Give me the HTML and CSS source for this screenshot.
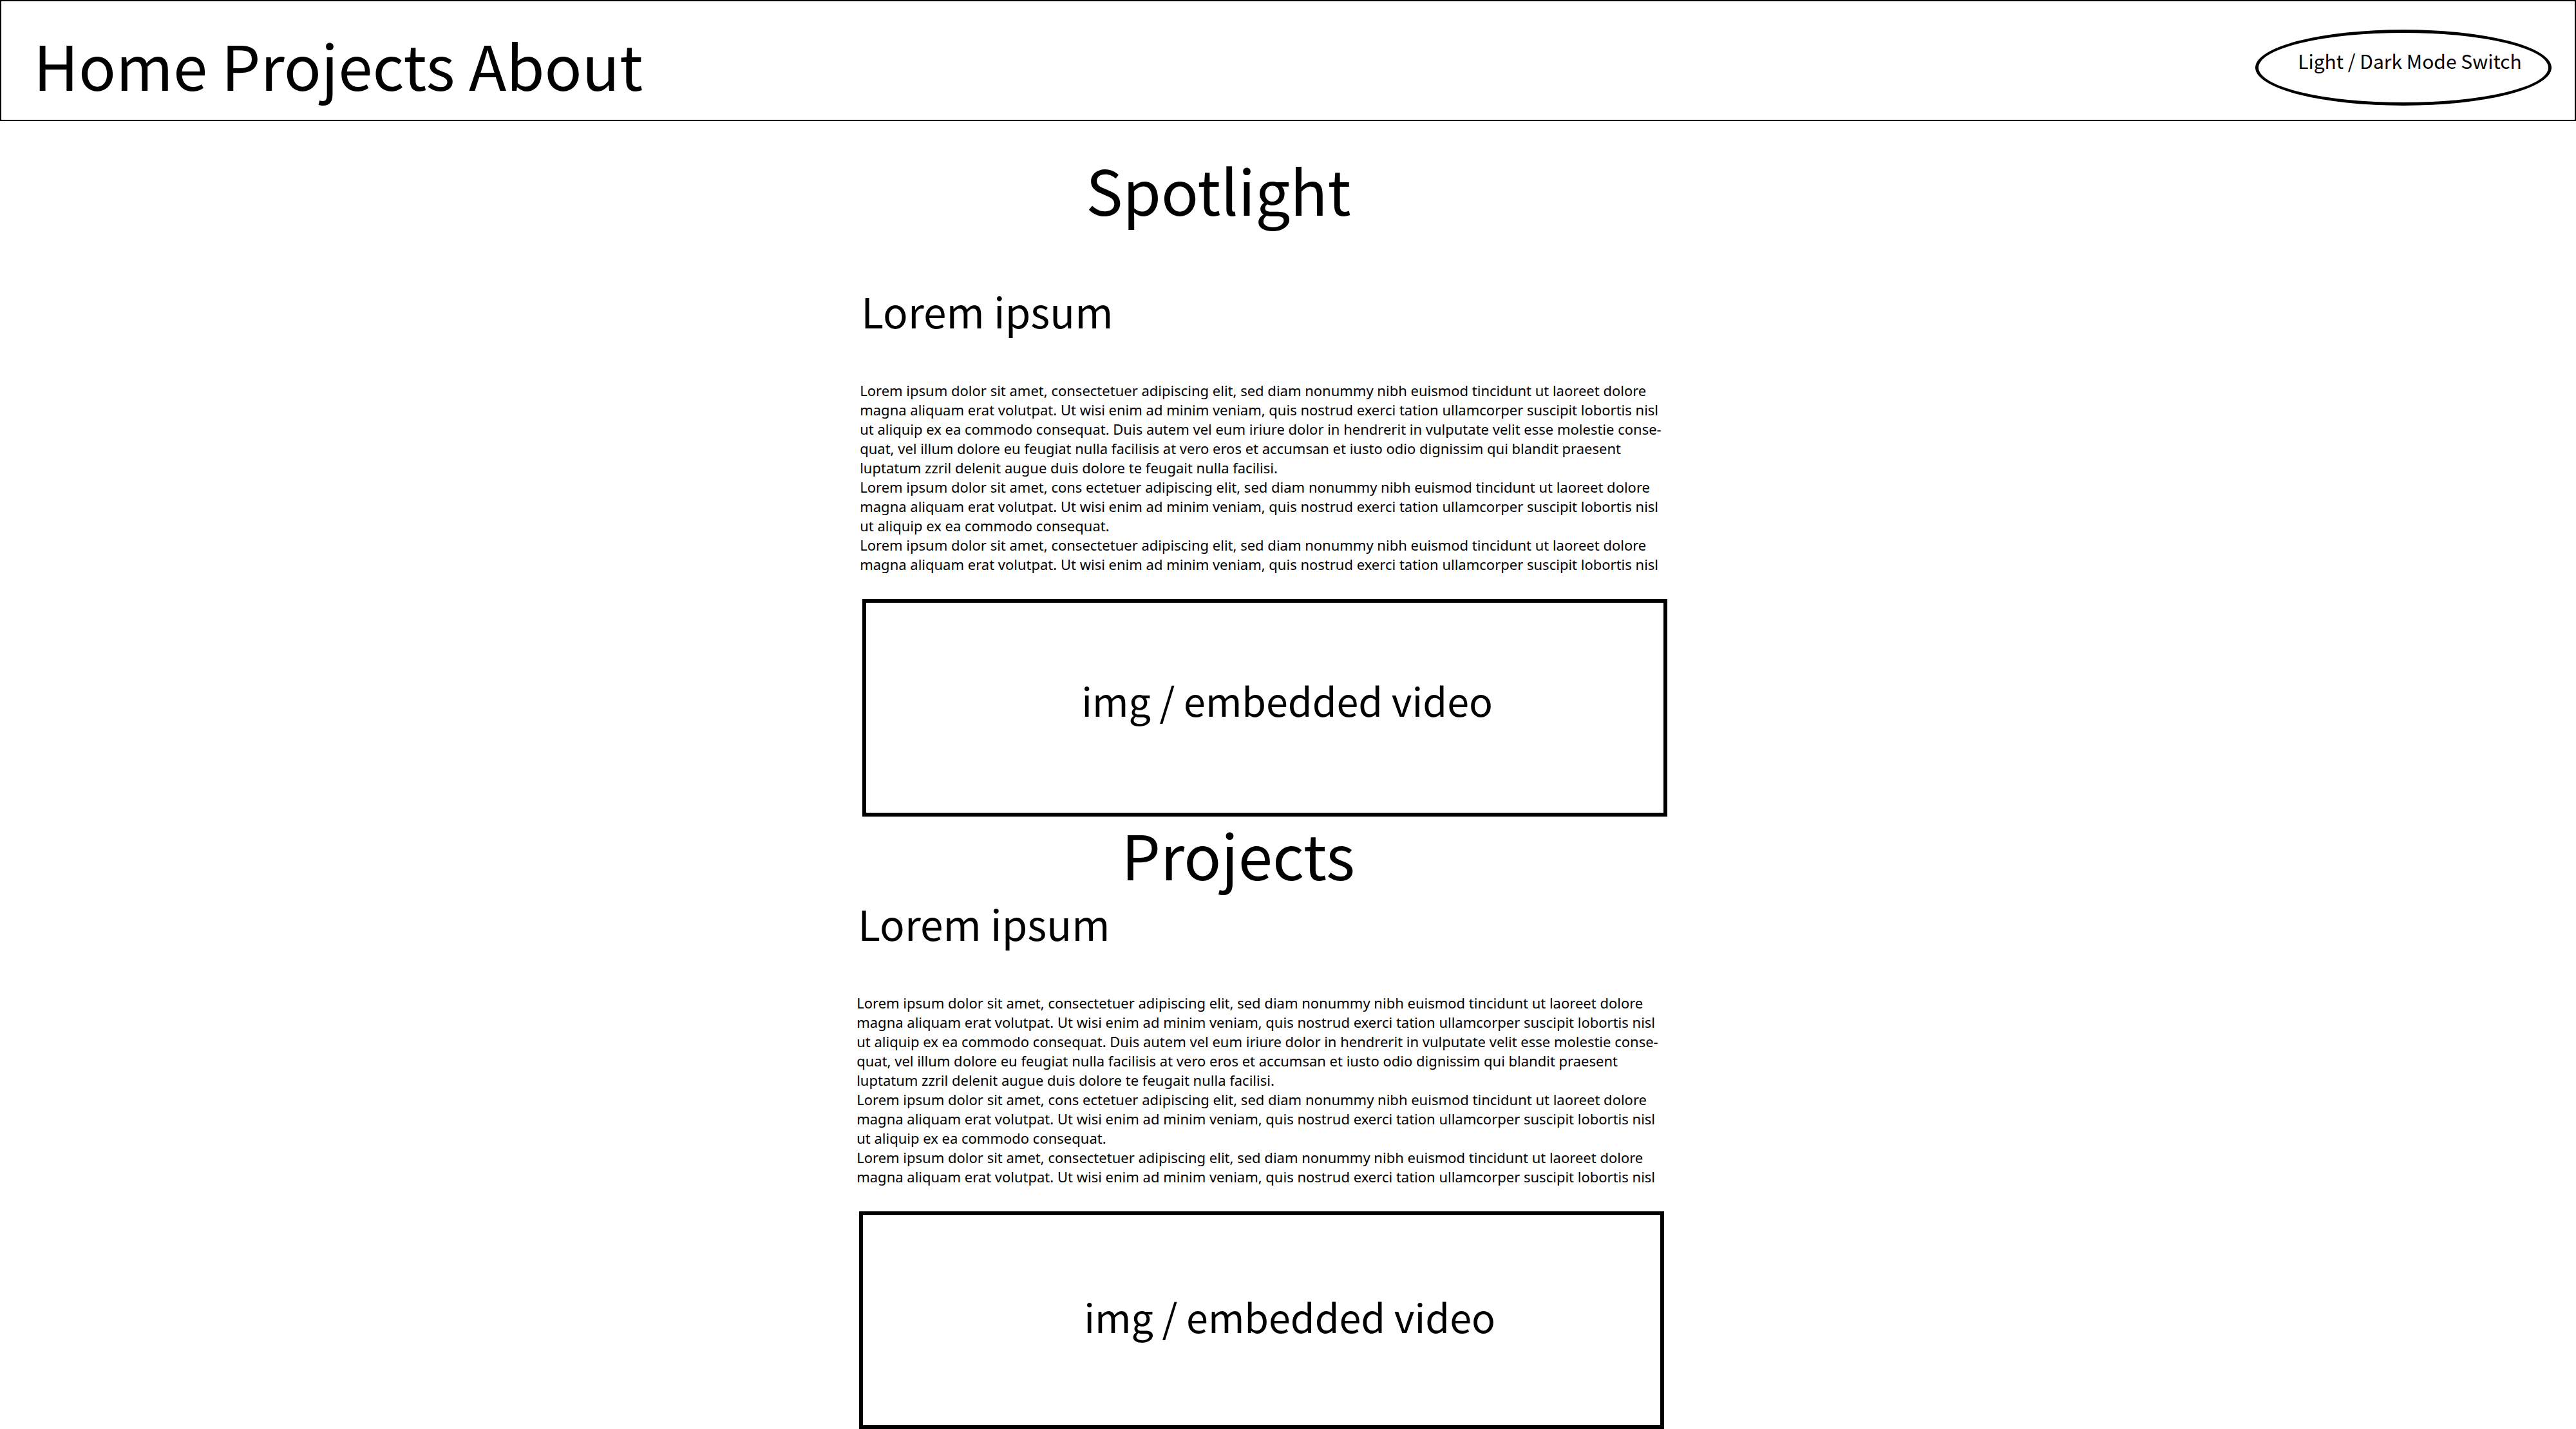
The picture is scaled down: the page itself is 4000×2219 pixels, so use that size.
FILE: index.html
```html
<!DOCTYPE html>
<html lang="en">
<head>
<meta charset="utf-8">
<title>Home</title>
<link rel="stylesheet" href="styles.css">
</head>
<body>
<header class="bar" id="home">
  <nav class="nav"><a href="#home">Home</a> <a href="#projects">Projects</a> <a href="#about">About</a></nav>
  <button class="mode" type="button">Light / Dark Mode Switch</button>
</header>
<main class="main">
  <section class="section spotlight">
    <h1 class="title">Spotlight</h1>
    <h2 class="subtitle">Lorem ipsum</h2>
    <p class="copy">Lorem ipsum dolor sit amet, consectetuer adipiscing elit, sed diam nonummy nibh euismod tincidunt ut laoreet dolore<br>magna aliquam erat volutpat. Ut wisi enim ad minim veniam, quis nostrud exerci tation ullamcorper suscipit lobortis nisl<br>ut aliquip ex ea commodo consequat. Duis autem vel eum iriure dolor in hendrerit in vulputate velit esse molestie conse-<br>quat, vel illum dolore eu feugiat nulla facilisis at vero eros et accumsan et iusto odio dignissim qui blandit praesent<br>luptatum zzril delenit augue duis dolore te feugait nulla facilisi.<br>Lorem ipsum dolor sit amet, cons ectetuer adipiscing elit, sed diam nonummy nibh euismod tincidunt ut laoreet dolore<br>magna aliquam erat volutpat. Ut wisi enim ad minim veniam, quis nostrud exerci tation ullamcorper suscipit lobortis nisl<br>ut aliquip ex ea commodo consequat.<br>Lorem ipsum dolor sit amet, consectetuer adipiscing elit, sed diam nonummy nibh euismod tincidunt ut laoreet dolore<br>magna aliquam erat volutpat. Ut wisi enim ad minim veniam, quis nostrud exerci tation ullamcorper suscipit lobortis nisl</p>
    <div class="media">img / embedded video</div>
  </section>
  <section class="section projects" id="projects">
    <h1 class="title">Projects</h1>
    <h2 class="subtitle">Lorem ipsum</h2>
    <p class="copy">Lorem ipsum dolor sit amet, consectetuer adipiscing elit, sed diam nonummy nibh euismod tincidunt ut laoreet dolore<br>magna aliquam erat volutpat. Ut wisi enim ad minim veniam, quis nostrud exerci tation ullamcorper suscipit lobortis nisl<br>ut aliquip ex ea commodo consequat. Duis autem vel eum iriure dolor in hendrerit in vulputate velit esse molestie conse-<br>quat, vel illum dolore eu feugiat nulla facilisis at vero eros et accumsan et iusto odio dignissim qui blandit praesent<br>luptatum zzril delenit augue duis dolore te feugait nulla facilisi.<br>Lorem ipsum dolor sit amet, cons ectetuer adipiscing elit, sed diam nonummy nibh euismod tincidunt ut laoreet dolore<br>magna aliquam erat volutpat. Ut wisi enim ad minim veniam, quis nostrud exerci tation ullamcorper suscipit lobortis nisl<br>ut aliquip ex ea commodo consequat.<br>Lorem ipsum dolor sit amet, consectetuer adipiscing elit, sed diam nonummy nibh euismod tincidunt ut laoreet dolore<br>magna aliquam erat volutpat. Ut wisi enim ad minim veniam, quis nostrud exerci tation ullamcorper suscipit lobortis nisl</p>
    <div class="media">img / embedded video</div>
  </section>
</main>
</body>
</html>
```
FILE: styles.css
```css
* { box-sizing: border-box; }

body {
  margin: 0;
  background: #fff;
  color: #000;
  font-family: "Noto Sans CJK SC", "Noto Sans", sans-serif;
}

.bar {
  display: flex;
  align-items: flex-start;
  justify-content: space-between;
  padding: 38px 36px 26px 50px;
  border: 2px solid #000;
}

.nav { font-size: 96px; line-height: 120px; white-space: nowrap; }
.nav a { color: inherit; text-decoration: none; }

.mode {
  width: 460px;
  height: 118px;
  margin-top: 6px;
  padding: 0 0 22px 20px;
  border: 5px solid #000;
  border-radius: 50%;
  background: #fff;
  color: #000;
  font-family: inherit;
  font-size: 30px;
  line-height: 40px;
  white-space: nowrap;
  margin-bottom: -4px;
}

.main { padding-left: 33.38%; }
.section { width: 1254px; max-width: 100%; }
.projects { margin-left: -5px; }

.title, .subtitle, .copy { margin: 0; font-weight: 400; white-space: nowrap; }
.title { font-size: 96px; line-height: 112px; }
.subtitle { padding-left: 2px; font-size: 64px; line-height: 80px; }
.copy { margin-top: 69px; font-family: "Noto Sans", sans-serif; font-size: 22px; line-height: 30px; }

.spotlight .title { padding: 50px 0 92px 351px; }
.projects .title { padding: 2px 0 11px 411px; }

.media {
  display: flex;
  align-items: center;
  height: 338px;
  margin: 39px 0 0 4px;
  padding: 0 0 24px 334px;
  border: 6px solid #000;
  font-size: 61px;
  line-height: 80px;
  white-space: nowrap;
}
.projects .media { padding: 0 0 12px 343px; }
```
